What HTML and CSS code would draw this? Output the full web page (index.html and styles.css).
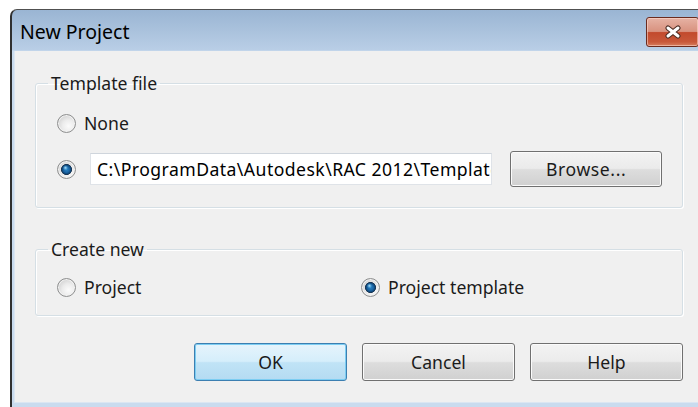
FILE: index.html
```html
<!DOCTYPE html>
<html lang="en">
<head>
<meta charset="utf-8">
<title>New Project</title>
<link rel="stylesheet" href="styles.css">
</head>
<body>
<div class="window">
  <div class="titlebar">
    <span class="title">New Project</span>
    <button class="close" type="button" aria-label="Close">
      <svg width="20" height="14" viewBox="0 0 20 14">
        <path d="M5 3 L15 11 M15 3 L5 11" stroke="#4a2b22" stroke-width="5" stroke-linecap="round" fill="none"/>
        <path d="M5 3 L15 11 M15 3 L5 11" stroke="#ffffff" stroke-width="3" stroke-linecap="round" fill="none"/>
      </svg>
    </button>
  </div>
  <div class="client">
    <fieldset class="group group-template">
      <legend>Template file</legend>
      <label class="row">
        <input class="radio" type="radio" name="tpl">
        <span>None</span>
      </label>
      <div class="row row-path">
        <input class="radio" type="radio" name="tpl" checked>
        <div class="path"><span class="path-text">C:\ProgramData\Autodesk\RAC 2012\Template</span></div>
        <button class="btn btn-browse" type="button">Browse...</button>
      </div>
    </fieldset>
    <fieldset class="group group-create">
      <legend>Create new</legend>
      <div class="row row-choices">
        <label class="choice">
          <input class="radio" type="radio" name="kind">
          <span>Project</span>
        </label>
        <label class="choice">
          <input class="radio" type="radio" name="kind" checked>
          <span>Project template</span>
        </label>
      </div>
    </fieldset>
    <div class="actions">
      <button class="btn btn-default" type="button">OK</button>
      <button class="btn" type="button">Cancel</button>
      <button class="btn" type="button">Help</button>
    </div>
  </div>
</div>
</body>
</html>
```
FILE: styles.css
```css
html, body {
  margin: 0;
  padding: 0;
  background: #ffffff;
  overflow: hidden;
  width: 698px;
  height: 407px;
}

body {
  font-family: "Noto Sans", "Open Sans", sans-serif;
  font-size: 17.6px;
  color: #1b1b1b;
}

/* window frame */
.window {
  margin: 9px 0 0 10px;
  width: 688px;
  height: 397px;
  border-top: 1px solid #505050;
  border-left: 2px solid #303030;
  border-top-left-radius: 7px;
  background: linear-gradient(to bottom, #9ab5d3 0, #b9cee6 40px, #c9dbee 41px, #c9dbee 100%);
  display: flex;
  flex-direction: column;
  overflow: hidden;
}

.titlebar {
  height: 41px;
  flex: none;
  display: flex;
  align-items: flex-start;
  padding-left: 8px;
}

.title {
  font-size: 19.5px;
  line-height: 44px;
  color: #000000;
}

.close {
  margin: 7px 1px 0 auto;
  width: 53px;
  height: 30px;
  padding: 0;
  border: 1px solid #6b2b1e;
  border-radius: 3px;
  background: linear-gradient(to bottom, #e6b2a4 0, #d8927f 48%, #c24a2d 52%, #c8583a 85%, #d77e5f 100%);
  box-shadow: inset 0 0 0 1px rgba(255, 220, 210, 0.55);
  display: flex;
  align-items: center;
  justify-content: center;
}

.close svg {
  display: block;
}

/* client area */
.client {
  margin-left: 2px;
  height: 352px;
  flex: none;
  border-left: 1px solid #dbe6f2;
  border-bottom: 1px solid #dbe6f2;
  background: #f0f0f0;
  padding: 22px 0 0 20px;
  box-sizing: border-box;
}

.group {
  margin: 0;
  min-width: 0;
  width: 648px;
  box-sizing: border-box;
  border: 1px solid #d5dfe5;
  border-radius: 3px;
  box-shadow: 1px 1px 0 #ffffff, inset 1px 1px 0 #ffffff;
}

.group legend {
  font-size: 17.6px;
  line-height: 20px;
  padding: 0 3px;
  margin-left: -9px;
  color: #1b1b1b;
}

.group-template {
  padding: 18px 20px 20px 21px;
}

.group-create {
  margin-top: 31px;
  padding: 16px 20px 16px 21px;
}

.row {
  display: flex;
  align-items: center;
  height: 24px;
}

.row > span {
  margin-left: 8px;
}

.row-path {
  margin-top: 16px;
  height: 36px;
}

.path {
  margin-left: 14px;
  width: 403px;
  height: 32px;
  box-sizing: border-box;
  border: 1px solid #dfe3e8;
  border-top-color: #cfd5dc;
  background: #ffffff;
  padding: 0 0 0 6px;
  line-height: 30px;
  white-space: nowrap;
  overflow: hidden;
  color: #000000;
}

.path-text {
  letter-spacing: 0.45px;
}

.row-choices {
  display: grid;
  grid-template-columns: 304px auto;
  height: 24px;
}

.choice {
  display: flex;
  align-items: center;
}

.choice > span {
  margin-left: 8px;
}

/* radio buttons */
.radio {
  appearance: none;
  -webkit-appearance: none;
  margin: 0;
  flex: none;
  width: 19px;
  height: 19px;
  border-radius: 50%;
  border: 1px solid #8e8f8f;
  box-sizing: border-box;
  background: radial-gradient(circle at 62% 65%, #fbfbfb 0, #ececec 40%, #cdcdcd 85%);
  box-shadow: inset 0 0 0 1px #f2f2f2;
}

.radio:checked {
  background:
    radial-gradient(circle at 44% 40%, rgba(180, 230, 255, 0.95) 0, rgba(120, 200, 245, 0.4) 1.6px, transparent 2.6px),
    radial-gradient(circle at 50% 50%, #2a85c6 0, #1a64a3 3px, #0f4677 4.4px, #1d3550 5.2px, transparent 5.8px),
    radial-gradient(circle at 62% 65%, #fbfbfb 0, #ececec 40%, #cdcdcd 85%);
}

/* push buttons */
.btn {
  font-family: inherit;
  font-size: 17.6px;
  color: #1b1b1b;
  width: 153px;
  height: 38px;
  padding: 0;
  box-sizing: border-box;
  border: 1px solid #707070;
  border-radius: 3px;
  background: linear-gradient(to bottom, #f3f3f3 0, #ebebeb 48%, #dddddd 52%, #d0d0d0 100%);
  box-shadow: inset 0 0 0 1px #fbfbfb;
}

.btn-browse {
  margin-left: 18px;
  width: 152px;
  height: 36px;
  letter-spacing: 0.6px;
}

.btn-default {
  border-color: #3c7fb1;
  background: linear-gradient(to bottom, #e6f4fc 0, #d5eefb 48%, #c0e3f6 52%, #b4dbf2 100%);
  box-shadow: inset 0 0 0 1px #7ccdf2;
}

.actions {
  width: 648px;
  margin-top: 27px;
  display: flex;
  justify-content: flex-end;
  gap: 15px;
}
```
